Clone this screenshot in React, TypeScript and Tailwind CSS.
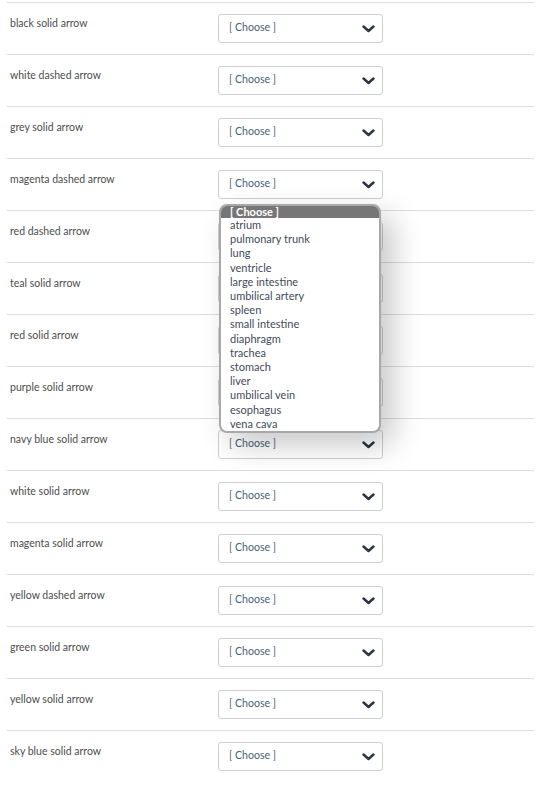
import React from "react";

const rows = [
  "black solid arrow",
  "white dashed arrow",
  "grey solid arrow",
  "magenta dashed arrow",
  "red dashed arrow",
  "teal solid arrow",
  "red solid arrow",
  "purple solid arrow",
  "navy blue solid arrow",
  "white solid arrow",
  "magenta solid arrow",
  "yellow dashed arrow",
  "green solid arrow",
  "yellow solid arrow",
  "sky blue solid arrow",
];

const options = [
  "atrium",
  "pulmonary trunk",
  "lung",
  "ventricle",
  "large intestine",
  "umbilical artery",
  "spleen",
  "small intestine",
  "diaphragm",
  "trachea",
  "stomach",
  "liver",
  "umbilical vein",
  "esophagus",
  "vena cava",
];

function Chevron() {
  return (
    <svg width="13" height="8" viewBox="0 0 13 8" className="shrink-0">
      <polyline
        points="1.5,1.5 6.5,6 11.5,1.5"
        fill="none"
        stroke="#2d3440"
        strokeWidth="2.4"
        strokeLinecap="round"
        strokeLinejoin="round"
      />
    </svg>
  );
}

function FakeSelect() {
  return (
    <div className="mt-[11px] flex h-[29px] w-[165px] items-center justify-between rounded-[3px] border border-[#cfcfcf] bg-white pl-[10px] pr-[7px]">
      <span className="mb-[3px] text-[10.6px] leading-4 text-[#4a5f7a]">[ Choose ]</span>
      <Chevron />
    </div>
  );
}

export default function App() {
  return (
    <main
      className="relative min-h-screen bg-white pl-[7px] pr-[5px] pt-[2px]"
      style={{ fontFamily: "Lato, 'Open Sans', sans-serif" }}
    >
      {rows.map((label) => (
        <div key={label} className="flex h-[52px] border-t border-[#dedede]">
          <div className="w-[211px] pl-[3px] pt-[12px] text-[10.5px] leading-4 text-[#4d4d4d]">
            {label}
          </div>
          <FakeSelect />
        </div>
      ))}

      {/* open dropdown of the magenta dashed arrow row */}
      <div className="absolute left-[219px] top-[204px] w-[162px] overflow-hidden rounded-[8px] border-2 border-[#a8a8a8] bg-white shadow-[12px_12px_30px_rgba(0,0,0,0.22)]">
        <div className="bg-[#767676] pl-[9px] text-[11px] font-bold leading-[12px] text-white">
          [ Choose ]
        </div>
        {options.map((o) => (
          <div
            key={o}
            className="pl-[9px] text-[11px] leading-[14.2px] text-[#3f4b5c]"
          >
            {o}
          </div>
        ))}
      </div>
    </main>
  );
}
